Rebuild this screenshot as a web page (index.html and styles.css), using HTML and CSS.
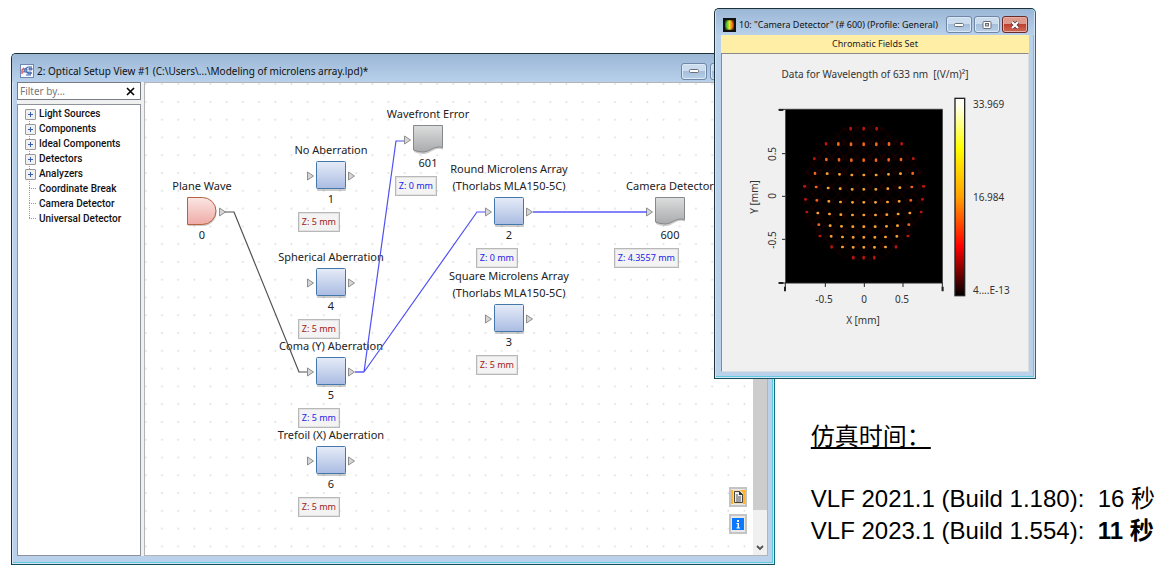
FILE: index.html
```html
<!DOCTYPE html>
<html lang="zh-CN">
<head>
<meta charset="utf-8">
<title>Optical Setup View</title>
<link rel="stylesheet" href="styles.css">
</head>
<body>
<svg class="defs" width="0" height="0" aria-hidden="true">
  <defs>
    <linearGradient id="blueFill" x1="0" y1="0" x2="0" y2="1"><stop offset="0" stop-color="#e6ecf8"/><stop offset="1" stop-color="#aabce2"/></linearGradient>
    <linearGradient id="redFill" x1="0" y1="0" x2="0" y2="1"><stop offset="0" stop-color="#fbe6e4"/><stop offset="1" stop-color="#efaba6"/></linearGradient>
    <linearGradient id="grayFill" x1="0" y1="0" x2="0" y2="1"><stop offset="0" stop-color="#dcdddd"/><stop offset="1" stop-color="#a9abac"/></linearGradient>
    <symbol id="portIn" viewBox="0 0 50 32"><path d="M1.500 12v8l6-4z" fill="#d6d6d6" stroke="#8f8f8f"/></symbol>
    <symbol id="portOut" viewBox="0 0 50 32"><path d="M42.500 12v8l6-4z" fill="#d6d6d6" stroke="#8f8f8f"/></symbol>
    <symbol id="component" viewBox="0 0 50 32"><rect x="11" y="3" width="29" height="28" rx="1" fill="#000" opacity=".2"/><rect x="10.500" y="1.500" width="29" height="27" rx="1" fill="url(#blueFill)" stroke="#4478ab"/></symbol>
    <symbol id="source" viewBox="0 0 50 32"><path d="M11 3h15a13.500 13.500 0 0 1 0 27h-15z" fill="#000" opacity=".2"/><path d="M10.500 1.500h15a13.500 13.500 0 0 1 0 27h-15z" fill="url(#redFill)" stroke="#b8613f"/></symbol>
    <symbol id="detector" viewBox="0 0 50 32"><path d="M11 2.500h29v23c-9-3-12 5-20 4.500q-5 0-9-2z" fill="#000" opacity=".2"/><path d="M10.500 1.500h29v22c-9-2-12 4-19 4.500q-6 0-10-2z" fill="url(#grayFill)" stroke="#84898d"/></symbol>
  </defs>
</svg>
<main class="desktop">
  <section class="window setup-window" aria-label="Optical Setup View">
    <header class="titlebar">
      <svg class="app-icon" width="14" height="14" viewBox="0 0 14 14"><rect x=".5" y=".5" width="13" height="13" fill="#f4f7fd" stroke="#6c86b5"/><path d="M2 10V6l2-2M2 8h2" stroke="#e24a4a" stroke-width="1.200" fill="none"/><path d="M5 5l3-2h4M5 7l3 2h4M6 11h5" stroke="#3d66b8" fill="none" stroke-width="1.200"/><path d="M4 5h3v3H4zM9 4h3v2H9zM8 8h3v2H8z" fill="#7fa0d8" stroke="#34589f" stroke-width=".7"/></svg>
      <h1 class="window-title">2: Optical Setup View #1 (C:\Users\...\Modeling of microlens array.lpd)*</h1>
      <div class="window-buttons">
        <button class="win-btn" aria-label="Minimize"><svg width="12" height="8" viewBox="0 0 12 8"><rect x="1.500" y="2.500" width="9" height="3" rx="1" fill="#fff" stroke="#6a6e78"/></svg></button>
        <button class="win-btn" aria-label="Maximize"><svg width="12" height="10" viewBox="0 0 12 10"><rect x="2" y="1.500" width="8" height="7" fill="#fff" stroke="#6a6e78"/></svg></button>
        <button class="win-btn close" aria-label="Close"><svg width="12" height="10" viewBox="0 0 12 10"><path d="M3 2l6 6M9 2l-6 6" stroke="#fff" stroke-width="2.500"/></svg></button>
      </div>
    </header>
    <div class="setup-body">
      <aside class="sidebar">
        <div class="filter">
          <input class="filter-input" type="text" placeholder="Filter by..." aria-label="Filter by">
          <button class="clear-btn" aria-label="Clear filter"><svg width="9" height="9" viewBox="0 0 9 9"><path d="M1 1l7 7M8 1l-7 7" stroke="#000" stroke-width="1.600"/></svg></button>
        </div>
        <ul class="tree">
          <li class="branch">Light Sources</li>
          <li class="branch">Components</li>
          <li class="branch">Ideal Components</li>
          <li class="branch">Detectors</li>
          <li class="branch">Analyzers</li>
          <li>Coordinate Break</li>
          <li>Camera Detector</li>
          <li>Universal Detector</li>
        </ul>
      </aside>
      <div class="view">
        <div class="canvas">
          <svg class="layer" width="100%" height="100%"><defs><pattern id="dots" x="9" y="10" width="16.180" height="17.780" patternUnits="userSpaceOnUse"><circle cx="8" cy="9" r="1" fill="#dedede"/></pattern></defs><rect width="100%" height="100%" fill="url(#dots)"/></svg>
          <div class="node plane-wave"><span class="node-name">Plane Wave</span><svg width="50" height="32"><use href="#source"/><use href="#portOut"/></svg><span class="node-id">0</span></div>
          <div class="node no-aberration"><span class="node-name">No Aberration</span><svg width="50" height="32"><use href="#component"/><use href="#portIn"/><use href="#portOut"/></svg><span class="node-id">1</span><span class="chip">Z: 5 mm</span></div>
          <div class="node spherical"><span class="node-name">Spherical Aberration</span><svg width="50" height="32"><use href="#component"/><use href="#portIn"/><use href="#portOut"/></svg><span class="node-id">4</span><span class="chip">Z: 5 mm</span></div>
          <div class="node coma"><span class="node-name">Coma (Y) Aberration</span><svg width="50" height="32"><use href="#component"/><use href="#portIn"/><use href="#portOut"/></svg><span class="node-id">5</span><span class="chip linked">Z: 5 mm</span></div>
          <div class="node trefoil"><span class="node-name">Trefoil (X) Aberration</span><svg width="50" height="32"><use href="#component"/><use href="#portIn"/><use href="#portOut"/></svg><span class="node-id">6</span><span class="chip">Z: 5 mm</span></div>
          <div class="node wavefront"><span class="node-name">Wavefront Error</span><svg width="50" height="32"><use href="#detector"/><use href="#portIn"/></svg><span class="node-id">601</span><span class="chip linked">Z: 0 mm</span></div>
          <div class="node round-array"><span class="node-name">Round Microlens Array<br>(Thorlabs MLA150-5C)</span><svg width="50" height="32"><use href="#component"/><use href="#portIn"/><use href="#portOut"/></svg><span class="node-id">2</span><span class="chip linked">Z: 0 mm</span></div>
          <div class="node square-array"><span class="node-name">Square Microlens Array<br>(Thorlabs MLA150-5C)</span><svg width="50" height="32"><use href="#component"/><use href="#portIn"/><use href="#portOut"/></svg><span class="node-id">3</span><span class="chip">Z: 5 mm</span></div>
          <div class="node camera"><span class="node-name">Camera Detector</span><svg width="50" height="32"><use href="#detector"/><use href="#portIn"/></svg><span class="node-id">600</span><span class="chip linked">Z: 4.3557 mm</span></div>
          <svg class="layer" width="100%" height="100%" fill="none"><g transform="translate(-145 -83)"><path d="M225 212h9l65 160h8" stroke="#505050" stroke-width="1.200"/><path d="M364 372l32-231h8M364 372l113-160h8" stroke="#5050f4" stroke-width="1.200"/><path d="M355 372h9M533 212h114" stroke="#5b5bf8" stroke-width="1.600"/></g></svg>
          <div class="tools">
            <button class="tool" aria-label="Notes"><svg width="14" height="14" viewBox="0 0 14 14"><rect width="14" height="14" fill="#ffb62e"/><path d="M2 0h7l3 3v11H2z" fill="#f0dcb8"/><path d="M3.500 1.500h5l3 3v8h-8z" fill="#eee" stroke="#444"/><path d="M8 1l4 4H8z" fill="#333"/><path d="M5 5h2M5 7h5M5 9h5M5 11h5" stroke="#555"/></svg></button>
            <button class="tool" aria-label="Information"><svg width="12" height="14" viewBox="0 0 12 14"><rect y="1" width="12" height="12" fill="#0a78ff"/><path d="M5 3h2v2H5zM4.500 6H7v4.500h1v1H4.500v-1h1V7h-1z" fill="#fff"/></svg></button>
          </div>
        </div>
        <div class="scrollbar"><div class="thumb"></div><button class="scroll-down" aria-label="Scroll down"><svg width="8" height="6" viewBox="0 0 8 6"><path d="M1 1l3 3 3-3" fill="none" stroke="#505050" stroke-width="1.800"/></svg></button></div>
      </div>
    </div>
  </section>

  <section class="window camera-window" aria-label="Camera Detector">
    <header class="titlebar">
      <svg class="app-icon" width="13" height="14" viewBox="0 0 13 14"><defs><linearGradient id="rainbow"><stop offset="0" stop-color="#08a040"/><stop offset=".5" stop-color="#e8e820"/><stop offset="1" stop-color="#f03010"/></linearGradient><radialGradient id="shade"><stop offset=".6" stop-color="#111" stop-opacity="0"/><stop offset="1" stop-color="#111" stop-opacity=".7"/></radialGradient></defs><rect width="13" height="14" fill="#111"/><rect x="2" y="2" width="9" height="10" rx="1" fill="url(#rainbow)"/><rect x="1" y="1" width="11" height="12" fill="url(#shade)"/></svg>
      <h2 class="window-title">10: "Camera Detector" (# 600) (Profile: General)</h2>
      <div class="window-buttons">
        <button class="win-btn" aria-label="Minimize"><svg width="12" height="8" viewBox="0 0 12 8"><rect x="1.500" y="2.500" width="9" height="3" rx="1" fill="#fff" stroke="#6a6e78"/></svg></button>
        <button class="win-btn" aria-label="Maximize"><svg width="12" height="10" viewBox="0 0 12 10"><rect x="2" y="1.500" width="8" height="7" rx="1" fill="#fff" stroke="#6a6e78"/><rect x="4.500" y="3.500" width="3" height="2.500" fill="#b9cbe2" stroke="#6a6e78"/></svg></button>
        <button class="win-btn close" aria-label="Close"><svg width="12" height="10" viewBox="0 0 12 10"><path d="M3 2l6 6M9 2l-6 6" stroke="#5b3238" stroke-width="3.800"/><path d="M3 2l6 6M9 2l-6 6" stroke="#fff" stroke-width="2.200"/></svg></button>
      </div>
    </header>
    <div class="banner">Chromatic Fields Set</div>
    <div class="plot">
      <svg class="chart" width="306" height="317" viewBox="0 0 306 317" role="img" aria-label="Camera detector data">
        <defs>
          <linearGradient id="heat" x1="0" y1="0" x2="0" y2="1"><stop offset="0" stop-color="#fff"/><stop offset=".05" stop-color="#ffffe0"/><stop offset=".25" stop-color="#ff0"/><stop offset=".5" stop-color="#ffa000"/><stop offset=".75" stop-color="#f00"/><stop offset="1" stop-color="#000"/></linearGradient>
          <pattern id="haze" width="38" height="44" x="4" y="18" patternUnits="userSpaceOnUse"><circle cx="19" cy="22" r="8" fill="#160000"/><path d="M0 0l38 44M38 0L0 44" stroke="#130000" stroke-width="4"/></pattern>
        </defs>
        <text class="chart-title" x="153" y="24" text-anchor="middle" xml:space="preserve">Data for Wavelength of 633 nm  [(V/m)²]</text>
        <g transform="translate(-12 46) scale(.33333)">
          <rect x="226" y="29" width="472" height="520" fill="#000"/>
          <ellipse cx="461" cy="278" rx="185" ry="205" fill="url(#haze)"/>
          <g fill="none" stroke-linecap="round">
            <path stroke="#b81410" stroke-width="8" d="M422 84v4M461 84v4M500 84v4M348 130v3M575 130v3M313 175v2M610 175v2M283 259h2M640 259h2M286 298h1M637 298h1M290 336h1M633 336h1M329 408h2M593 408h2M365 440v2M558 440v2M430 471v4M461 471v4M493 471v4"/>
            <path stroke="#f0641c" stroke-width="8" d="M385 130v4M423 131v4M461 131v4M499 131v4M537 130v4M349 177v3M387 178v3M424 179v3M461 179v3M498 179v3M536 178v3M573 177v3M315 219v2M608 219v2M320 301h1M602 301h1M326 374h1M596 374h1M318 261h1M605 261h1"/>
            <path stroke="#f8a030" stroke-width="8" d="M351 221h1M388 223h1M425 225h1M461 225h1M498 225h1M535 223h1M571 221h1M354 264h1M390 266h1M426 268h1M461 268h1M497 268h1M533 266h1M569 263h1M356 304h1M391 306h1M427 307h1M461 307h1M496 307h1M532 306h1M567 304h1M323 339h1M358 342h1M392 344h1M427 345h1M461 345h1M496 345h1M530 344h1M564 342h1M599 339h1M360 377h1M394 379h1M428 380h1M461 380h1M495 380h1M529 379h1M562 377h1M363 409h1M397 411h1M429 412h1M461 412h1M494 412h1M526 411h1M560 409h1M397 441h1M429 442h1M461 442h1M493 442h1M526 441h1"/>
          </g>
          <g stroke="#222" stroke-width="3" fill="none"><path d="M206 28h20M226 28h472M216 161h10M216 289h10M216 418h10M206 549h492M226 549v24M346 549v12M463 549v12M579 549v12M697 549v24"/><path d="M206 30h14M206 549h14M225 560v14M698 560v14" stroke-width="6"/></g>
          <rect x="735" y="-5" width="29" height="592" fill="url(#heat)" stroke="#222" stroke-width="4"/>
        </g>
        <g class="ticks">
          <text x="251" y="54">33.969</text><text x="251" y="147">16.984</text><text x="251" y="240">4....E-13</text>
          <g text-anchor="middle"><text x="102" y="249">-0.5</text><text x="142" y="249">0</text><text x="180" y="249">0.5</text><text x="141" y="270">X [mm]</text>
          <text transform="translate(54 100) rotate(-90)">0.5</text><text transform="translate(54 142) rotate(-90)">0</text><text transform="translate(54 186) rotate(-90)">-0.5</text><text transform="translate(36 143) rotate(-90)">Y [mm]</text></g>
        </g>
      </svg>
    </div>
  </section>

  <section class="timing">
    <h2 class="timing-title">仿真时间：</h2>
    <p>VLF 2021.1 (Build 1.180):&nbsp; 16 秒</p>
    <p>VLF 2023.1 (Build 1.554):&nbsp; <strong>11 秒</strong></p>
  </section>
</main>
</body>
</html>
```
FILE: styles.css
```css
* { box-sizing: border-box; }
body { margin: 0; background: #fff; color: #222; font: 11px/16px "Noto Sans", "Open Sans", sans-serif; }
h1, h2, p, ul { margin: 0; padding: 0; }
button { padding: 0; font: inherit; }
svg { display: block; flex: none; }
.defs { position: absolute; }

.desktop { position: relative; display: flex; justify-content: flex-end; align-items: flex-end; min-height: 100vh; padding: 0 8px 28px; }

/* windows */
.window { position: absolute; display: flex; flex-direction: column; padding: 0 6px 6px 5px; background: #b9d1ea; border: 1px solid #1c3038; border-right-color: #16707f; border-bottom-color: #16505c; border-radius: 5px 5px 0 0; box-shadow: inset 0 0 0 1px #d4e6f6, inset -1px -1px 0 1px #5fcbe0; }
.setup-window { left: 11px; right: 388px; top: 53px; bottom: 10px; padding-bottom: 8px; }
.camera-window { right: 127px; top: 8px; padding-left: 6px; }
.titlebar { display: flex; align-items: center; gap: 3px; height: 28px; margin: 0 -5px; padding: 6px 8px 0; border-radius: 4px 4px 0 0; background: linear-gradient(#9bb7d6, #b8d0ea); }
.camera-window .titlebar { height: 26px; padding: 5px 6px 0 7px; }
.window-title { flex: 1; overflow: hidden; white-space: nowrap; font-size: 10px; font-weight: 400; color: #111; }
.camera-window .window-title { font-size: 9px; }
.window-buttons { display: flex; gap: 2px; }
.setup-window .window-buttons { gap: 3px; }
.win-btn { display: flex; align-items: center; justify-content: center; width: 26px; height: 17px; border: 1px solid #6f86a4; border-radius: 3px; background: linear-gradient(#cbdcee 45%, #a5bfdc 50%, #b8d0e8); box-shadow: inset 0 0 0 1px #dbe8f5; }
.win-btn.close { border-color: #6b2a2a; background: linear-gradient(#dd9a8c 45%, #bf4030 50%, #cf6a54); box-shadow: inset 0 0 0 1px #e6b0a6; }

/* setup window */
.setup-body { flex: 1; display: flex; gap: 3px; min-height: 0; background: #f0f0f0; }
.sidebar { display: flex; flex-direction: column; gap: 4px; width: 124px; }
.filter { display: flex; align-items: center; height: 18px; padding-right: 5px; background: #fff; border: 1px solid #777c84; }
.filter-input { flex: 1; min-width: 0; padding: 0 2px; border: 0; background: none; font: 10px/16px "Noto Sans", sans-serif; }
.filter-input::placeholder { color: #777; }
.clear-btn { border: 0; background: none; }
.tree { flex: 1; padding: 1px 0 0 11px; list-style: none; background: #fff; border: 1px solid #8d929b; font: 500 10px Roboto, "Noto Sans", sans-serif; color: #111; }
.tree li { position: relative; height: 15px; padding-left: 10px; line-height: 15px; white-space: nowrap; }
.tree li::before { content: ""; position: absolute; left: 0; top: 7px; width: 7px; border-top: 1px dotted #999; }
.tree li::after { content: ""; position: absolute; left: 0; top: -8px; height: 15px; border-left: 1px dotted #999; }
.tree li:first-child::after { display: none; }
.tree .branch::before { left: -4px; top: 3px; width: 9px; height: 9px; z-index: 1; border: 1px solid #999; border-radius: 1px; background: linear-gradient(#3a5fa8, #3a5fa8) center / 5px 1px no-repeat, linear-gradient(#3a5fa8, #3a5fa8) center / 1px 5px no-repeat, #f0f0f0; }
.view { flex: 1; display: flex; min-width: 0; border: 1px solid #b4b4b8; background: #fff; }
.canvas { position: relative; flex: 1; min-width: 0; overflow: hidden; }
.layer { position: absolute; inset: 0; pointer-events: none; }
.scrollbar { display: flex; flex-direction: column; width: 14px; background: #f0f0f0; }
.thumb { flex: 1; background: #cdcdcd; }
.scroll-down { display: flex; align-items: flex-end; justify-content: center; height: 45px; padding-bottom: 4px; border: 0; background: #f0f0f0; }
.tools { position: absolute; right: 6px; bottom: 21px; display: grid; gap: 7px; }
.tool { display: flex; align-items: center; justify-content: center; width: 18px; height: 20px; border: 2px solid #c4c4c4; background: #e9e9e9; }

/* diagram nodes */
.node { position: absolute; display: flex; flex-direction: column; align-items: center; width: 130px; }
.node-name { text-align: center; line-height: 17px; white-space: nowrap; padding-bottom: 2px; }
.node-id { height: 20px; line-height: 14px; }
.chip { align-self: flex-end; margin-right: 56px; height: 20px; padding: 0 3px; border: 1px solid #b8b8b8; outline: 1px solid #e2e2e2; outline-offset: -2px; background: #f3f3f3; color: #a02020; font-size: 9px; line-height: 18px; white-space: nowrap; }
.chip.linked { color: #2424e8; }
.plane-wave { left: -8px; top: 94px; }
.no-aberration { left: 121px; top: 58px; }
.spherical { left: 121px; top: 165px; }
.coma { left: 121px; top: 254px; }
.trefoil { left: 121px; top: 343px; }
.wavefront { left: 218px; top: 22px; }
.round-array { left: 299px; top: 77px; }
.square-array { left: 299px; top: 184px; }
.camera { left: 460px; top: 94px; }

/* camera window */
.banner { height: 18px; line-height: 18px; text-align: center; background: #ffeea6; font-size: 9px; }
.plot { background: #f0f0f0; border: 1px solid #8a8a8a; border-right-color: #ddd; border-bottom-color: #ddd; }
.chart { font-family: "Noto Sans", sans-serif; fill: #333; }
.chart-title { font-size: 10px; }
.ticks { font-size: 10px; }

/* timing notes */
.timing { color: #000; font: 24px/32px "Liberation Sans", "Noto Sans CJK SC", sans-serif; white-space: nowrap; }
.timing-title { margin-bottom: 30px; font-size: 24px; font-weight: 400; text-decoration: underline; }
```
